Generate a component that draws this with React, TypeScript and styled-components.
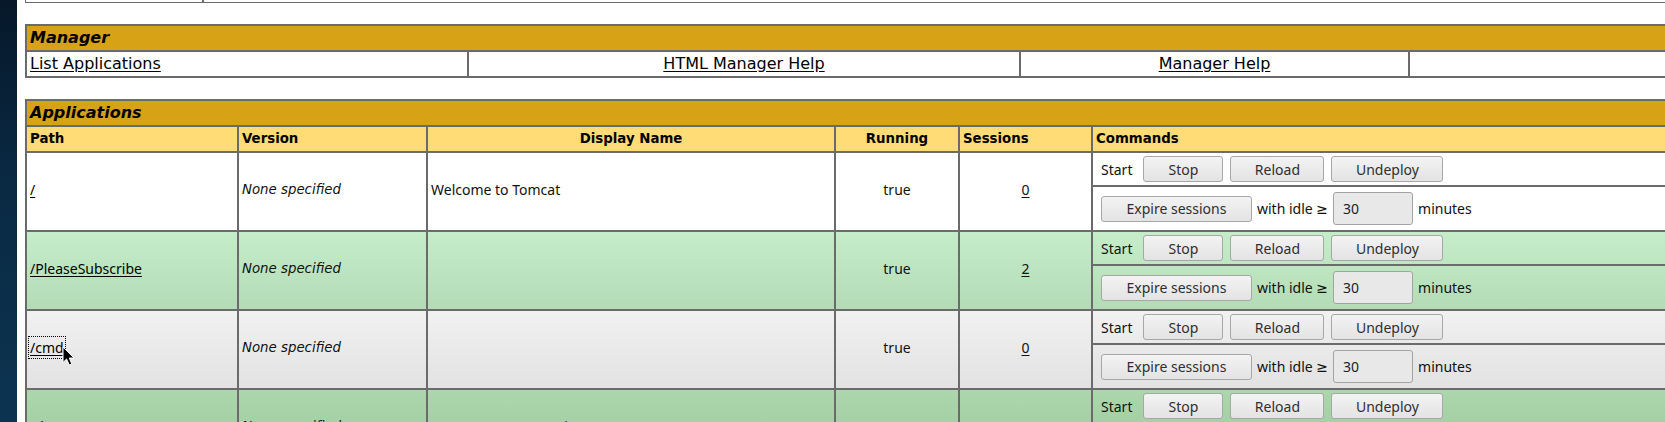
import React from 'react';
import styled, { createGlobalStyle } from 'styled-components';

const GlobalStyle = createGlobalStyle`
  html, body {
    margin: 0;
    padding: 0;
    overflow: hidden;
    background: #ffffff;
  }
  body {
    font-family: "DejaVu Sans", sans-serif;
    color: #000;
  }
`;

type Tone = 'white' | 'green' | 'gray' | 'deep';
type Part = 'full' | 'top' | 'bottom';

const tones: Record<Tone, [string, string, string]> = {
  white: ['#ffffff', '#ffffff', '#ffffff'],
  green: ['#c6edc9', '#bee6c1', '#b3dbb6'],
  gray: ['#f1f1f1', '#eaeaea', '#e2e2e2'],
  deep: ['#acd7ad', '#a5d0a6', '#9dc89e'],
};

const toneBg = (tone: Tone, part: Part) => {
  const [a, m, b] = tones[tone];
  if (part === 'top') return `linear-gradient(180deg, ${a} 0%, ${m} 100%)`;
  if (part === 'bottom') return `linear-gradient(180deg, ${m} 0%, ${b} 100%)`;
  return `linear-gradient(180deg, ${a} 0%, ${b} 100%)`;
};

const LINE = '#6b6b6b';
const TABLE_W = 1900;

const Screen = styled.div`
  display: flex;
  width: ${TABLE_W + 40}px;
  height: 422px;
  overflow: hidden;
`;

const Desktop = styled.div`
  flex: 0 0 17px;
  background: linear-gradient(180deg, #06182a 0%, #0a2a44 45%, #0c3451 100%);
`;

const Page = styled.main`
  flex: 1;
  padding-left: 8px;
  background: #ffffff;
`;

const MessageStub = styled.div`
  display: flex;
  width: ${TABLE_W}px;
  height: 3px;
  border: 1px solid ${LINE};
  border-top: none;
  box-sizing: border-box;
`;

const StubCell = styled.div<{ $w?: number }>`
  flex: ${(p) => (p.$w ? `0 0 ${p.$w}px` : '1')};
  border-right: ${(p) => (p.$w ? `2px solid ${LINE}` : 'none')};
`;

const Table = styled.table`
  width: ${TABLE_W}px;
  margin-top: 21px;
  table-layout: fixed;
  border-collapse: separate;
  border-spacing: 0;
  border: 1px solid ${LINE};
`;

const Col = styled.col<{ $w?: number }>`
  width: ${(p) => (p.$w ? `${p.$w}px` : 'auto')};
`;

const TitleCell = styled.td`
  padding: 3px;
  border: 1px solid ${LINE};
  background: #d8a217;
  font-family: "DejaVu Sans", sans-serif;
  font-size: 16px;
  line-height: 18px;
  font-weight: bold;
  font-style: italic;
  text-align: left;
  color: #000;
`;

const LinkCell = styled.td<{ $align: 'left' | 'center' | 'right' }>`
  padding: 3px;
  border: 1px solid ${LINE};
  background: #ffffff;
  font-family: "DejaVu Sans", sans-serif;
  font-size: 16px;
  line-height: 18px;
  text-align: ${(p) => p.$align};
  white-space: nowrap;
  overflow: hidden;
`;

const PageLink = styled.a`
  color: #000;
  text-decoration: underline;
  text-underline-offset: 2px;
`;

const HeadCell = styled.td<{ $align: 'left' | 'center' }>`
  padding: 3px;
  border: 1px solid ${LINE};
  background: #ffdc75;
  font-family: "DejaVu Sans", sans-serif;
  font-size: 13.33px;
  line-height: 18px;
  font-weight: bold;
  text-align: ${(p) => p.$align};
  color: #000;
`;

const DataCell = styled.td<{ $tone: Tone; $align: 'left' | 'center' }>`
  padding: 1px 3px 5px;
  border: 1px solid ${LINE};
  background: ${(p) => toneBg(p.$tone, 'full')};
  vertical-align: middle;
  text-align: ${(p) => p.$align};
  font-family: "Noto Sans", sans-serif;
  font-size: 14px;
  line-height: 18px;
  color: #111;
  white-space: nowrap;
`;

const Unspecified = styled.i`
  font-family: "DejaVu Sans", sans-serif;
  font-size: 13.33px;
  font-style: oblique;
`;

const PathAnchor = styled.span`
  position: relative;
  display: inline-block;
`;

const PathLink = styled.a<{ $focused?: boolean }>`
  color: #000;
  font-family: "Noto Sans", sans-serif;
  font-size: 14px;
  text-decoration: underline;
  text-underline-offset: 2px;
  outline: ${(p) => (p.$focused ? '1px dotted #000' : 'none')};
  outline-offset: 1px;
`;

const SessionLink = styled.a`
  color: #111;
  text-decoration: underline;
  text-underline-offset: 2px;
`;

const Cursor = styled.svg`
  position: absolute;
  left: calc(100% - 2px);
  top: 7px;
  width: 13px;
  height: 20px;
  pointer-events: none;
`;

const CmdCell = styled.td<{ $tone: Tone; $part: Part }>`
  padding: 3px;
  border: 1px solid ${LINE};
  background: ${(p) => toneBg(p.$tone, p.$part)};
  vertical-align: middle;
`;

const CmdLine = styled.div<{ $tall?: boolean }>`
  display: flex;
  align-items: center;
  gap: ${(p) => (p.$tall ? 5 : 7)}px;
  height: ${(p) => (p.$tall ? 37 : 26)}px;
  padding-left: 5px;
  font-family: "Noto Sans", "DejaVu Sans", sans-serif;
  font-size: 14px;
  color: #111;
  white-space: nowrap;
`;

const StartLabel = styled.span`
  margin-right: 4px;
`;

const CmdButton = styled.button<{ $w: number }>`
  box-sizing: border-box;
  width: ${(p) => p.$w}px;
  height: 26px;
  padding: 0;
  border: 1px solid #a7a7a7;
  border-radius: 3px;
  background: linear-gradient(180deg, #f3f3f3 0%, #e3e3e3 100%);
  font-family: "Noto Sans", sans-serif;
  font-size: 14px;
  color: #2f2f2f;
`;

const IdleInput = styled.input`
  box-sizing: border-box;
  width: 80px;
  height: 33px;
  padding: 0 9px;
  border: 1px solid #a3a3a3;
  border-radius: 3px;
  background: #e8e8e8;
  font-family: "Noto Sans", sans-serif;
  font-size: 14px;
  color: #222;
`;

type App = {
  path: string;
  display: string;
  sessions: number;
  tone: Tone;
  focused?: boolean;
};

const apps: App[] = [
  { path: '/', display: 'Welcome to Tomcat', sessions: 0, tone: 'white' },
  { path: '/PleaseSubscribe', display: '', sessions: 2, tone: 'green' },
  { path: '/cmd', display: '', sessions: 0, tone: 'gray', focused: true },
  { path: '/docs', display: 'Tomcat Documentation', sessions: 0, tone: 'deep' },
  { path: '/examples', display: 'Servlet and JSP Examples', sessions: 0, tone: 'gray' },
];

const AppRows: React.FC<{ app: App }> = ({ app }) => (
  <>
    <tr>
      <DataCell rowSpan={2} $tone={app.tone} $align="left">
        <PathAnchor>
          <PathLink href="#" $focused={app.focused}>
            {app.path}
          </PathLink>
          {app.focused && (
            <Cursor viewBox="0 0 13 20">
              <path
                d="M1 1 L1 16.5 L4.6 13 L7.2 19 L9.8 17.9 L7.3 12 L12 12 Z"
                fill="#000"
                stroke="#fff"
                strokeWidth="1"
                strokeLinejoin="round"
              />
            </Cursor>
          )}
        </PathAnchor>
      </DataCell>
      <DataCell rowSpan={2} $tone={app.tone} $align="left">
        <Unspecified>None specified</Unspecified>
      </DataCell>
      <DataCell rowSpan={2} $tone={app.tone} $align="left">
        {app.display}
      </DataCell>
      <DataCell rowSpan={2} $tone={app.tone} $align="center">
        true
      </DataCell>
      <DataCell rowSpan={2} $tone={app.tone} $align="center">
        <SessionLink href="#">{app.sessions}</SessionLink>
      </DataCell>
      <CmdCell $tone={app.tone} $part="top">
        <CmdLine>
          <StartLabel>Start</StartLabel>
          <CmdButton $w={80}>Stop</CmdButton>
          <CmdButton $w={94}>Reload</CmdButton>
          <CmdButton $w={112}>Undeploy</CmdButton>
        </CmdLine>
      </CmdCell>
    </tr>
    <tr>
      <CmdCell $tone={app.tone} $part="bottom">
        <CmdLine $tall>
          <CmdButton $w={151}>Expire sessions</CmdButton>
          <span>with idle ≥</span>
          <IdleInput defaultValue="30" />
          <span>minutes</span>
        </CmdLine>
      </CmdCell>
    </tr>
  </>
);

export default function App() {
  return (
    <>
      <GlobalStyle />
      <Screen>
        <Desktop />
        <Page>
          <MessageStub>
            <StubCell $w={176} />
            <StubCell />
          </MessageStub>

          <Table>
            <colgroup>
              <Col $w={442} />
              <Col $w={552} />
              <Col $w={389} />
              <Col />
            </colgroup>
            <tbody>
              <tr>
                <TitleCell colSpan={4}>Manager</TitleCell>
              </tr>
              <tr>
                <LinkCell $align="left">
                  <PageLink href="#">List Applications</PageLink>
                </LinkCell>
                <LinkCell $align="center">
                  <PageLink href="#">HTML Manager Help</PageLink>
                </LinkCell>
                <LinkCell $align="center">
                  <PageLink href="#">Manager Help</PageLink>
                </LinkCell>
                <LinkCell $align="right">
                  <PageLink href="#">Server Status</PageLink>
                </LinkCell>
              </tr>
            </tbody>
          </Table>

          <Table>
            <colgroup>
              <Col $w={212} />
              <Col $w={189} />
              <Col $w={408} />
              <Col $w={124} />
              <Col $w={133} />
              <Col />
            </colgroup>
            <tbody>
              <tr>
                <TitleCell colSpan={6}>Applications</TitleCell>
              </tr>
              <tr>
                <HeadCell $align="left">Path</HeadCell>
                <HeadCell $align="left">Version</HeadCell>
                <HeadCell $align="center">Display Name</HeadCell>
                <HeadCell $align="center">Running</HeadCell>
                <HeadCell $align="left">Sessions</HeadCell>
                <HeadCell $align="left">Commands</HeadCell>
              </tr>
              {apps.map((app) => (
                <AppRows key={app.path} app={app} />
              ))}
            </tbody>
          </Table>
        </Page>
      </Screen>
    </>
  );
}
